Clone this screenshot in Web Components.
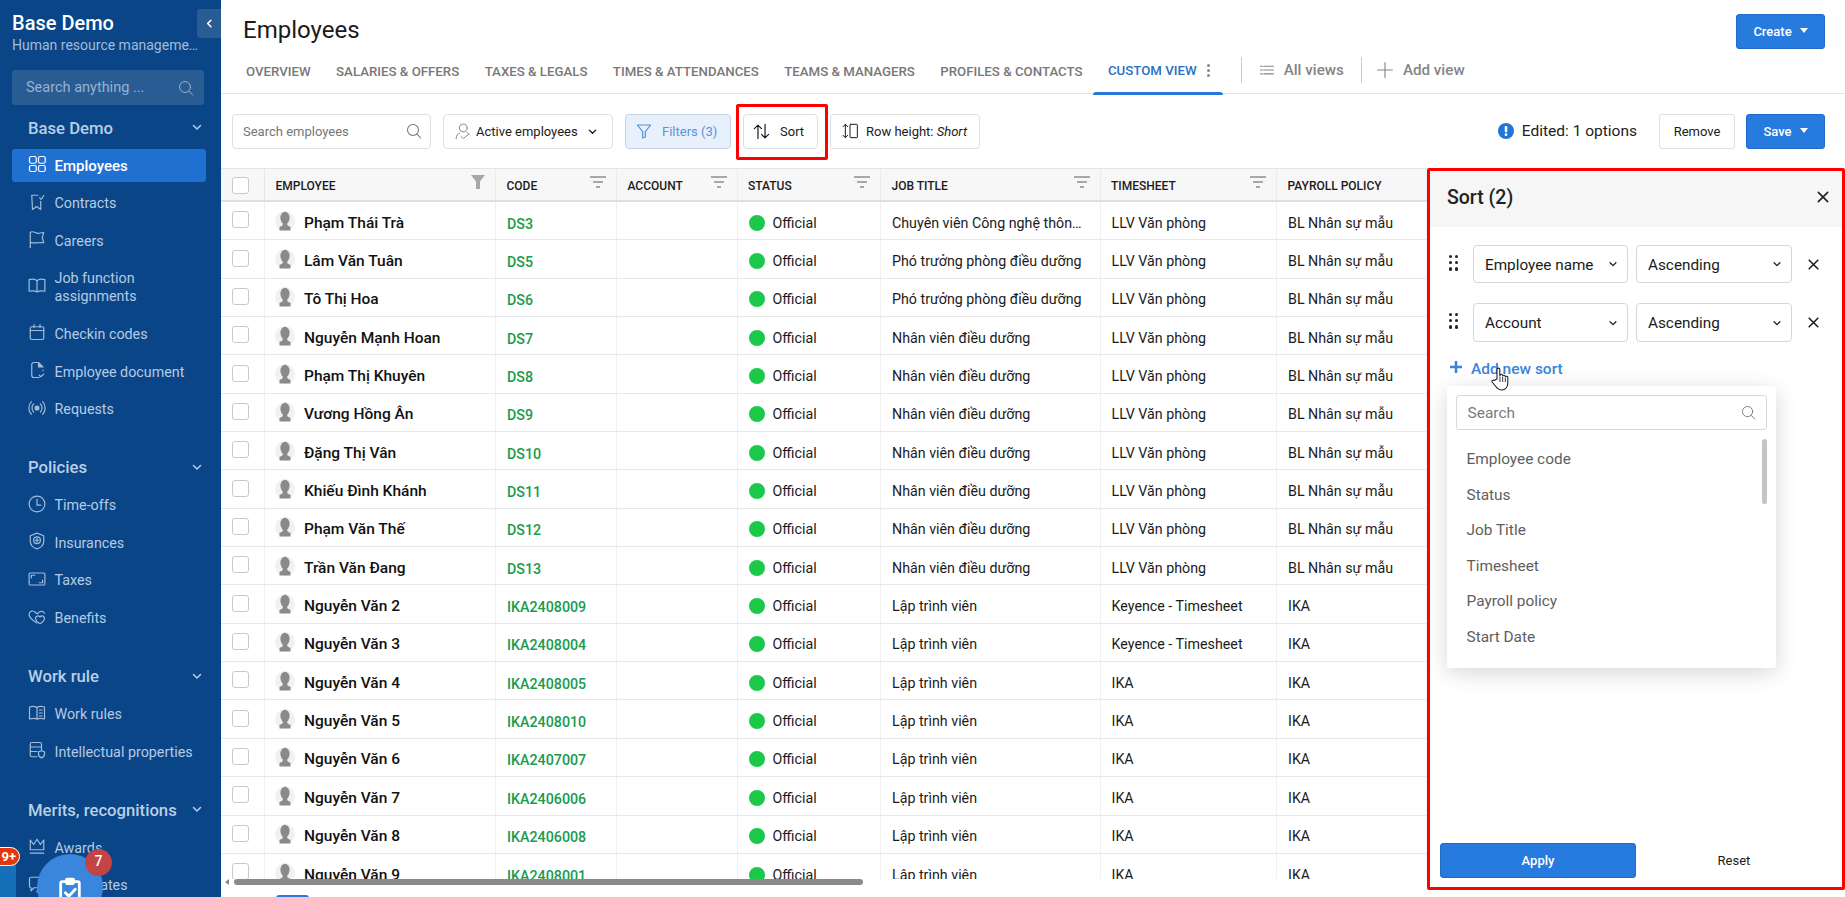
<!DOCTYPE html>
<html lang="en">
  <head>
    <meta charset="UTF-8" />
    <meta name="viewport" content="width=device-width, initial-scale=1.0" />
    <title>Employees</title>
    <style>
      html, body { margin: 0; height: 100%; overflow: hidden; background: #fff; }
      body { font-family: Roboto, "Noto Sans", sans-serif; }
    </style>
  </head>
  <body>
    <app-shell></app-shell>
    <script>
      // Icon set, all on a 24x24 box and drawn with currentColor
      const ICONS = {
        search: '<circle cx="10.5" cy="10.5" r="8.2"/><path d="M16.5 16.8 22 22.5"/>',
        chev: '<path d="M5 9l7 7 7-7" stroke-width="3"/>',
        chevLeft: '<path d="M15 5l-7 7 7 7" stroke-width="3.4"/>',
        grid: '<rect x="2" y="2" width="9" height="9" rx="2.4"/><rect x="14" y="2" width="9" height="9" rx="2.4"/><rect x="2" y="14" width="9" height="8" rx="2.4"/><rect x="14" y="14" width="9" height="8" rx="2.4"/>',
        contract: '<path d="M13 3H5l1 19 5.5-4 5.5 4V11"/><path d="M15.5 6.5l2 2 3.5-5"/>',
        flag: '<path d="M3 24V3c5-2.5 7 2 11 1.5 3-.3 5-1.5 7-1.5l-2 7 2 7c-6-1-10 1.5-18-.5"/>',
        book: '<path d="M12 5C10 3 6 2.5 1.5 3.5V19c4-.8 8-.5 10.5.8 2.5-1.3 6.5-1.6 10.5-.8V3.5C18 2.5 14 3 12 5zM12 5v15"/>',
        calendar: '<rect x="3" y="5" width="18" height="17" rx="2"/><path d="M3 10h18M8 2v4M16 2v4"/>',
        doc: '<path d="M14 2H8a3 3 0 0 0-3 3v14a3 3 0 0 0 3 3h7"/><path d="M14 2l6 6h-6z" fill="currentColor"/><path d="M20 12v1M15 19l2 2 4-3.5"/>',
        radio: '<circle cx="12" cy="12" r="2.6" fill="currentColor"/><path d="M7.5 6.5a8 8 0 0 0 0 11M16.5 6.5a8 8 0 0 1 0 11M4.5 3.5a12.5 12.5 0 0 0 0 17M19.5 3.5a12.5 12.5 0 0 1 0 17"/>',
        clock: '<circle cx="12" cy="12" r="10.5"/><path d="M12 5.5V13.5h5"/>',
        shield: '<path d="M12 1.5l9 3.5v7c0 5.5-4 9-9 10.5C7 21 3 17.5 3 12V5z"/><circle cx="12" cy="11" r="4.5"/><path d="M12 8.5v5M9.5 11h5"/>',
        tax: '<rect x="1.5" y="4" width="21" height="16" rx="1.5"/><path d="M4.5 10.5V7H9M19.5 13.5V17H15"/>',
        hearts: '<path d="M12 20C5 16 1 12 1.5 8 2 4 7 2.5 10 6c1 1.2 2 2 3 1.5"/><path d="M16 21c-3-2-6-4-6-7 0-3.5 4-4.5 6-2 2-2.5 6-1.5 6 2 0 3-3 5-6 7z"/><path d="M13 7c2-3 7-4 9 0"/>',
        rules: '<path d="M12 5C10 3 6 3 2 4v16c4-1 8-1 10 .5 2-1.5 6-1.5 10-.5V4c-4-1-8-1-10 1zM12 5v15"/><path d="M15 8h4M15 12h4M15 16h4"/>',
        ip: '<path d="M12 21H5a2 2 0 0 1-2-2V4a2 2 0 0 1 2-2h11a2 2 0 0 1 2 2v8M3 8h15M3 14h9"/><path d="M18 13l4 1.5v3c0 2.5-2 4-4 5-2-1-4-2.5-4-5v-3z"/>',
        crown: '<path d="M3 4l4.5 6L12 3l4.5 7L21 4v13H3zM3 21.5h18"/>',
        cert: '<path d="M14 17H8l-4 4v-4a2 2 0 0 1-2-2V5a2 2 0 0 1 2-2h15a2 2 0 0 1 2 2v3"/><circle cx="17" cy="13" r="3"/><path d="M12 23c0-3 2-4.5 5-4.5s5 1.5 5 4.5"/>',
        user: '<circle cx="13" cy="7" r="5.5"/><path d="M3 22c0-4 2-7 5-8M18 13c1.5.8 2.5 2 3 3.5"/><path d="M10 19l3 3 8-6.5"/>',
        funnel: '<path d="M2 3h20l-8 10v8l-4 1.5V13z"/>',
        sort: '<path d="M7 22V3M2 8l5-5 5 5M17 2v19M12 16l5 5 5-5"/>',
        rowh: '<rect x="12" y="2" width="11" height="20" rx="1"/><path d="M5 2v20M1.5 5.5 5 2l3.5 3.5M1.5 18.5 5 22l3.5-3.5"/>',
        list: '<path d="M6.5 5.5H23M6.5 12H23M6.5 18.5H23M1 5.5h3M1 12h3M1 18.5h3"/>',
        plus: '<path d="M12 1v22M1 12h22"/>',
        cross: '<path d="M4 4l16 16M20 4 4 20" stroke-width="2.8"/>',
        clip: '<rect x="4" y="4" width="16" height="19" rx="1.5" stroke-width="2.4"/><rect x="8.5" y="1.5" width="7" height="4.5" rx="1" fill="currentColor"/><path d="M8 13.5l3 3 5.5-6" stroke-width="2.4"/>',
      };

      class UiIcon extends HTMLElement {
        connectedCallback() {
          const size = this.getAttribute("size") || 18;
          const sw = this.getAttribute("stroke") || 1.6;
          this.attachShadow({ mode: "open" }).innerHTML = `
            <style>:host { display: inline-flex; flex: none; line-height: 0; }</style>
            <svg width="${size}" height="${size}" viewBox="0 0 24 24" fill="none" stroke="currentColor"
                 stroke-width="${sw}" stroke-linecap="round" stroke-linejoin="round">${ICONS[this.getAttribute("name")]}</svg>`;
        }
      }
      customElements.define("ui-icon", UiIcon);

      // Sidebar entry
      class NavItem extends HTMLElement {
        connectedCallback() {
          this.attachShadow({ mode: "open" }).innerHTML = `
            <style>
              :host { display: flex; align-items: center; gap: 8.5px; margin: 0 15px 0 12px; padding: 7.5px 8px 7.5px 16px;
                      min-height: 18px; font-size: 14.3px; line-height: 18px; color: #b5cbe4; border-radius: 3px; }
              :host([active]) { background: #1f70d0; color: #fff; font-weight: 500; font-size: 15px; }
              ui-icon { color: #9fbcda; width: 18px; margin-top: -3px; }
              :host([active]) ui-icon { color: #fff; }
            </style>
            <ui-icon name="${this.getAttribute("icon")}"></ui-icon><span><slot></slot></span>`;
        }
      }
      customElements.define("nav-item", NavItem);

      class NavSection extends HTMLElement {
        connectedCallback() {
          this.attachShadow({ mode: "open" }).innerHTML = `
            <style>
              :host { display: flex; flex-direction: column; gap: 4.6px; margin-bottom: 25.5px; }
              header { display: flex; align-items: center; justify-content: space-between; height: 33px;
                       padding: 0 18px 0 28px; font-size: 16.7px; font-weight: 500; color: #b9cfe6; }
              ui-icon { color: #b9cfe6; margin-top: -2px; }
            </style>
            <header>${this.getAttribute("label")}<ui-icon name="chev" size="12"></ui-icon></header>
            <slot></slot>`;
        }
      }
      customElements.define("nav-section", NavSection);

      class SideBar extends HTMLElement {
        connectedCallback() {
          this.attachShadow({ mode: "open" }).innerHTML = `
            <style>
              :host { display: block; position: relative; height: 897px; background: #0a4587; overflow: hidden; color: #fff; }
              .brand { padding: 11px 20px 0 12px; height: 57px; box-sizing: border-box; }
              .brand b { display: block; font-size: 20px; font-weight: 500; line-height: 24px; }
              .brand small { display: block; margin-top: 0; font-size: 14px; line-height: 20px; color: #a3bcd6;
                             white-space: nowrap; overflow: hidden; text-overflow: ellipsis; }
              .collapse { position: absolute; top: 9px; right: 0; width: 24px; height: 29px; display: flex; align-items: center;
                          justify-content: center; background: #2a5c94; border-radius: 3px 0 0 3px; }
              .search { display: flex; align-items: center; justify-content: space-between; box-sizing: border-box;
                        margin: 13px 17px 6.5px 12px; height: 35px; padding: 0 10px 0 14px; background: #2a5c94; border-radius: 3px;
                        font-size: 14.5px; color: #98b2ce; }
              .left-dock { position: absolute; left: 0; top: 857px; width: 16px; height: 40px; background: #1570b8; border-radius: 0 6px 0 0; }
              .count { position: absolute; left: -12px; top: 847px; width: 27px; height: 17px; padding-right: 3px; border-radius: 10px; background: #e3380e;
                       border: 1.5px solid #fff; text-align: right; font-size: 13px; line-height: 17px; font-weight: 700; }
              .fab { position: absolute; left: 37px; top: 854px; width: 66px; height: 66px; border-radius: 50%; background: #3a86dc;
                     display: flex; justify-content: center; padding-top: 23px; box-sizing: border-box; }
              .badge { position: absolute; left: 85px; top: 849px; width: 27px; height: 27px; border-radius: 50%; background: #c44343;
                       text-align: center; font-size: 14px; line-height: 24px; font-weight: 500; }
            </style>
            <div class="brand"><b>Base Demo</b><small>Human resource management system</small></div>
            <div class="collapse"><ui-icon name="chevLeft" size="11" stroke="3"></ui-icon></div>
            <div class="search">Search anything ...<ui-icon name="search" size="16" stroke="1.5"></ui-icon></div>
            <slot></slot>
            <div class="left-dock"></div>
            <div class="count">9+</div>
            <div class="fab"><ui-icon name="clip" size="28"></ui-icon></div>
            <div class="badge">7</div>`;
        }
      }
      customElements.define("side-bar", SideBar);

      class PageHeader extends HTMLElement {
        connectedCallback() {
          const tabs = ["OVERVIEW", "SALARIES & OFFERS", "TAXES & LEGALS", "TIMES & ATTENDANCES", "TEAMS & MANAGERS", "PROFILES & CONTACTS"];
          this.attachShadow({ mode: "open" }).innerHTML = `
            <style>
              :host { display: block; height: 94px; box-sizing: border-box; border-bottom: 1.5px solid #e4e4e4; }
              .top { display: flex; justify-content: space-between; align-items: flex-start; height: 49px; padding: 14px 20px 0 22px; box-sizing: border-box; }
              h1 { margin: 0; font-size: 24px; font-weight: 400; line-height: 32px; color: #1b1b1b; }
              .tabs { display: flex; align-items: center; height: 44px; padding-left: 25px; font-size: 13.25px; font-weight: 500; color: #787878; white-space: nowrap; }
              .tab { margin-right: 25.4px; }
              .active { position: relative; display: flex; align-items: center; height: 44px; margin-left: -15px; padding: 0 13px 2px 15px; margin-right: 0; color: #2a70c2; }
              .active::after { content: ""; position: absolute; left: 0; right: 0; bottom: -1px; height: 3px; background: #2779d9; border-radius: 3px 3px 0 0; }
              .dots { margin-left: 10px; display: grid; gap: 2px; }
              .dots i { width: 3px; height: 3px; border-radius: 50%; background: #888; }
              .sep { width: 1px; height: 26px; background: #ccc; margin: -2px 18px 0 18px; }
              .link { display: flex; align-items: center; gap: 10px; margin-top: -3px; font-size: 15.2px; font-weight: 500; color: #858585; }
              .link + .sep { margin-left: 17px; margin-right: 15px; }
            </style>
            <div class="top"><h1>Employees</h1><ui-button primary caret style="width:89px">Create</ui-button></div>
            <div class="tabs">
              ${tabs.map((t) => `<span class="tab">${t.replace(/&/g, "&amp;")}</span>`).join("")}
              <span class="tab active">CUSTOM VIEW<span class="dots"><i></i><i></i><i></i></span></span>
              <span class="sep"></span>
              <span class="link"><ui-icon name="list" size="14" stroke="2"></ui-icon>All views</span>
              <span class="sep"></span>
              <span class="link"><ui-icon name="plus" size="16" stroke="1.7"></ui-icon>Add view</span>
            </div>`;
        }
      }
      customElements.define("page-header", PageHeader);

      class UiButton extends HTMLElement {
        connectedCallback() {
          const caret = this.hasAttribute("caret");
          this.attachShadow({ mode: "open" }).innerHTML = `
            <style>
              :host { display: inline-flex; align-items: center; justify-content: center; gap: 8px; box-sizing: border-box; height: 35px;
                      padding: 0 14px; font-size: 13px; background: #fff; color: #1b1b1b; border: 1px solid #dfdfdf; border-radius: 3px; white-space: nowrap; }
              :host([primary]) { background: #277ade; border-color: #1f6cc6; color: #fff; font-weight: 500; }
              .caret { width: 0; height: 0; border: 4.5px solid transparent; border-top: 5px solid #fff; border-bottom: 0; margin-top: -2px; }
            </style>
            <slot></slot>${caret ? '<span class="caret"></span>' : ""}`;
        }
      }
      customElements.define("ui-button", UiButton);

      class ToolChip extends HTMLElement {
        connectedCallback() {
          this.attachShadow({ mode: "open" }).innerHTML = `
            <style>
              :host { position: relative; display: inline-flex; align-items: center; box-sizing: border-box; height: 35px; padding: 0 11px;
                      font-size: 13px; color: #1b1b1b; background: #fff; border: 1px solid #dfdfdf; border-radius: 4px; white-space: nowrap; flex: none; }
              :host([on]) { background: #e8f0fb; border-color: #c3d3e6; color: #5b92de; }
              :host([marked])::after { content: ""; position: absolute; left: -8px; right: -11px; top: -11px; bottom: -12px; border: 3px solid #f00; border-radius: 2px; }
            </style>
            <slot></slot>`;
        }
      }
      customElements.define("tool-chip", ToolChip);

      class PageToolbar extends HTMLElement {
        connectedCallback() {
          this.attachShadow({ mode: "open" }).innerHTML = `
            <style>
              :host { display: flex; align-items: center; gap: 12px; height: 74px; box-sizing: border-box; padding: 0 20px 0 11px; }
              .find { width: 199px; justify-content: space-between; color: #767676; padding: 0 8px 0 10px; }
              .spacer { flex: 1; }
              .edited { display: flex; align-items: center; gap: 8px; font-size: 15.5px; color: #222; margin-right: 10px; }
              svg { display: block; flex: none; }
              .g { color: #8a8a8a; margin-right: 5px; margin-left: -1px; }
              .blue { color: #4a94dd; margin-right: 10px; margin-left: -1px; }
              .i { color: #1b1b1b; }
              em { font-style: italic; }
            </style>
            <tool-chip class="find">Search employees<ui-icon name="search" size="16" stroke="1.6"></ui-icon></tool-chip>
            <tool-chip style="width:170px"><ui-icon class="g" name="user" size="17" stroke="1.4"></ui-icon>Active employees<ui-icon name="chev" size="11" style="margin-left:9px"></ui-icon></tool-chip>
            <tool-chip on style="width:106px"><ui-icon class="blue" name="funnel" size="16" stroke="1.8"></ui-icon>Filters (3)</tool-chip>
            <tool-chip marked style="width:75px;padding-left:9px"><ui-icon class="i" name="sort" size="17" stroke="1.7" style="margin-right:10px"></ui-icon>Sort</tool-chip>
            <tool-chip style="width:150px"><ui-icon class="i" name="rowh" size="16" stroke="1.5" style="margin-right:8px"></ui-icon><span>Row height: <em>Short</em></span></tool-chip>
            <span class="spacer"></span>
            <span class="edited"><svg width="16" height="16" viewBox="0 0 15 15"><circle cx="7.5" cy="7.5" r="7.5" fill="#2276d8"/><rect x="6.3" y="2.8" width="2.4" height="6" rx="1" fill="#fff"/><circle cx="7.5" cy="11" r="1.3" fill="#fff"/></svg>Edited: 1 options</span>
            <ui-button style="width:76px">Remove</ui-button>
            <ui-button primary caret style="width:79px;margin-left:-1px">Save</ui-button>`;
        }
      }
      customElements.define("page-toolbar", PageToolbar);

      const COLS = "44px 231px 121px 120.5px 143.5px 219.5px 176.5px 1fr";

      class HeadCell extends HTMLElement {
        connectedCallback() {
          const kind = this.getAttribute("filter");
          const glyph = kind === "solid"
            ? '<svg width="14" height="14" viewBox="0 0 14 14"><path d="M0 0h14L9 6.5V14H5V6.5z" fill="#a8a8a8"/></svg>'
            : kind === "lines"
            ? '<svg width="16" height="12" viewBox="0 0 16 12"><path d="M0 1h16M3 6h10M6 11h4" stroke="#a8a8a8" stroke-width="2"/></svg>'
            : "";
          this.attachShadow({ mode: "open" }).innerHTML = `
            <style>
              :host { display: flex; align-items: center; justify-content: space-between; box-sizing: border-box; padding: 0 10px 0 10.5px;
                      font-size: 12px; font-weight: 500; color: #1b1b1b; border-right: 1px solid #ececec; min-width: 0; }
              span { padding-top: 3px; }
              svg { margin-top: -5px; }
            </style>
            <span><slot></slot></span>${glyph}`;
        }
      }
      customElements.define("head-cell", HeadCell);

      class CheckBox extends HTMLElement {
        connectedCallback() {
          this.attachShadow({ mode: "open" }).innerHTML = `
            <style>
              :host { display: block; width: 17px; height: 17px; box-sizing: border-box; background: #fff; border: 1px solid #c9c9c9; border-radius: 3px; }
            </style>`;
        }
      }
      customElements.define("check-box", CheckBox);

      class EmployeeRow extends HTMLElement {
        connectedCallback() {
          const a = (n) => this.getAttribute(n);
          this.attachShadow({ mode: "open" }).innerHTML = `
            <style>
              :host { display: grid; grid-template-columns: ${COLS}; height: 38.35px; box-sizing: border-box; border-bottom: 1px solid #e8e8e8; font-size: 14.25px; color: #1b1b1b; }
              div { display: flex; align-items: center; box-sizing: border-box; padding: 4px 11px 0; border-right: 1px solid #f0f0f0; white-space: nowrap; overflow: hidden; min-width: 0; }
              .check { padding: 0 0 2px 11px; }
              .name { padding: 0 0 0 10px; gap: 9px; font-size: 15.5px; font-weight: 500; color: #111; }
              .name span { padding-top: 4px; }
              .code { font-weight: 500; color: #1a9b4b; padding-top: 6px; }
              .dot { width: 16px; height: 16px; border-radius: 50%; background: #1cc84a; margin-right: 8px; flex: none; }
              .title { padding-right: 14px; }
              .title span { overflow: hidden; text-overflow: ellipsis; }
              svg { flex: none; }
            </style>
            <div class="check"><check-box></check-box></div>
            <div class="name"><svg width="20" height="20" viewBox="0 0 20 20"><circle cx="10" cy="10" r="10" fill="#f1f1f1"/><ellipse cx="10" cy="7" rx="4.6" ry="6.2" fill="#8a8a8a"/><path d="M8 11.5h4l.5 3 3 1.500V19.500H4.500V16l3-1.500z" fill="#8a8a8a"/></svg><span>${a("name")}</span></div>
            <div class="code">${a("code")}</div>
            <div></div>
            <div><span class="dot"></span>Official</div>
            <div class="title"><span>${a("job")}</span></div>
            <div>${a("sheet")}</div>
            <div>${a("policy")}</div>`;
        }
      }
      customElements.define("employee-row", EmployeeRow);

      const PEOPLE = [
        ["Phạm Thái Trà", "DS3", "Chuyên viên Công nghệ thông tin"],
        ["Lâm Văn Tuân", "DS5", "Phó trưởng phòng điều dưỡng"],
        ["Tô Thị Hoa", "DS6", "Phó trưởng phòng điều dưỡng"],
        ["Nguyễn Mạnh Hoan", "DS7", "Nhân viên điều dưỡng"],
        ["Phạm Thị Khuyên", "DS8", "Nhân viên điều dưỡng"],
        ["Vương Hồng Ân", "DS9", "Nhân viên điều dưỡng"],
        ["Đặng Thị Vân", "DS10", "Nhân viên điều dưỡng"],
        ["Khiếu Đình Khánh", "DS11", "Nhân viên điều dưỡng"],
        ["Phạm Văn Thế", "DS12", "Nhân viên điều dưỡng"],
        ["Trần Văn Đang", "DS13", "Nhân viên điều dưỡng"],
        ["Nguyễn Văn 2", "IKA2408009", "Lập trình viên", "Keyence - Timesheet", "IKA"],
        ["Nguyễn Văn 3", "IKA2408004", "Lập trình viên", "Keyence - Timesheet", "IKA"],
        ["Nguyễn Văn 4", "IKA2408005", "Lập trình viên", "IKA", "IKA"],
        ["Nguyễn Văn 5", "IKA2408010", "Lập trình viên", "IKA", "IKA"],
        ["Nguyễn Văn 6", "IKA2407007", "Lập trình viên", "IKA", "IKA"],
        ["Nguyễn Văn 7", "IKA2406006", "Lập trình viên", "IKA", "IKA"],
        ["Nguyễn Văn 8", "IKA2406008", "Lập trình viên", "IKA", "IKA"],
        ["Nguyễn Văn 9", "IKA2408001", "Lập trình viên", "IKA", "IKA"],
      ];

      class DataTable extends HTMLElement {
        connectedCallback() {
          const rows = PEOPLE.map(([name, code, job, sheet = "LLV Văn phòng", policy = "BL Nhân sự mẫu"]) =>
            `<employee-row name="${name}" code="${code}" job="${job}" sheet="${sheet}" policy="${policy}"></employee-row>`).join("");
          this.attachShadow({ mode: "open" }).innerHTML = `
            <style>
              :host { display: flex; flex-direction: column; flex: 1; min-width: 0; height: 729px; }
              .head { display: grid; grid-template-columns: ${COLS}; height: 34px; box-sizing: border-box; flex: none;
                      background: #f7f7f7; border-top: 1px solid #e4e4e4; border-bottom: 2px solid #dfdfdf; }
              .box { display: flex; align-items: center; padding: 2px 0 0 11px; border-right: 1px solid #e6e6e6; }
              .rows { height: 677px; overflow: hidden; flex: none; }
              .bar { display: flex; align-items: center; height: 6px; flex: none; padding-left: 4px; gap: 4px; }
              .bar i { width: 0; height: 0; border: 3px solid transparent; border-right: 4px solid #888; border-left: 0; }
              .bar b { width: 629px; height: 6px; margin-left: 1px; background: #8a8a8a; border-radius: 3px; }
              .pager { margin: 10px 0 0 55px; width: 33px; height: 12px; background: #277ade; border-radius: 3px; flex: none; }
            </style>
            <div class="head">
              <div class="box"><check-box></check-box></div>
              <head-cell filter="solid">EMPLOYEE</head-cell>
              <head-cell filter="lines">CODE</head-cell>
              <head-cell filter="lines">ACCOUNT</head-cell>
              <head-cell filter="lines">STATUS</head-cell>
              <head-cell filter="lines">JOB TITLE</head-cell>
              <head-cell filter="lines">TIMESHEET</head-cell>
              <head-cell>PAYROLL POLICY</head-cell>
            </div>
            <div class="rows">${rows}</div>
            <div class="bar"><i></i><b></b></div>
            <div class="pager"></div>`;
        }
      }
      customElements.define("data-table", DataTable);

      class SelectBox extends HTMLElement {
        connectedCallback() {
          this.attachShadow({ mode: "open" }).innerHTML = `
            <style>
              :host { display: flex; align-items: center; justify-content: space-between; box-sizing: border-box; padding: 0 9px 0 11px;
                      border: 1px solid #d6d6d6; border-radius: 4px; font-size: 15.3px; color: #1b1b1b; background: #fff; white-space: nowrap; }
              span { padding-top: 1px; }
            </style>
            <span><slot></slot></span><ui-icon name="chev" size="10"></ui-icon>`;
        }
      }
      customElements.define("select-box", SelectBox);

      class SortRule extends HTMLElement {
        connectedCallback() {
          this.attachShadow({ mode: "open" }).innerHTML = `
            <style>
              :host { display: grid; grid-template-columns: 154.5px 155.5px; gap: 8.5px; height: ${this.getAttribute("h") || 38}px; padding-left: 43px; position: relative; }
              .drag { position: absolute; left: 19px; top: 10px; display: grid; grid-template-columns: 3.2px 3.2px; gap: 3px; }
              .drag i { width: 3.2px; height: 3.2px; background: #222; border-radius: 50%; }
              .x { position: absolute; left: 377px; top: 13px; color: #1b1b1b; }
            </style>
            <span class="drag"><i></i><i></i><i></i><i></i><i></i><i></i></span>
            <select-box>${this.getAttribute("field")}</select-box>
            <select-box>Ascending</select-box>
            <ui-icon class="x" name="cross" size="13"></ui-icon>`;
        }
      }
      customElements.define("sort-rule", SortRule);

      class FieldMenu extends HTMLElement {
        connectedCallback() {
          const items = ["Employee code", "Status", "Job Title", "Timesheet", "Payroll policy", "Start Date"];
          this.attachShadow({ mode: "open" }).innerHTML = `
            <style>
              :host { display: block; position: relative; box-sizing: border-box; width: 329px; height: 281.5px; margin: 7px 0 0 17px; padding: 9px 9px 0 8.5px;
                      background: #fff; border-radius: 3px; box-shadow: 0 5px 22px rgba(0,0,0,.16); }
              .find { display: flex; align-items: center; justify-content: space-between; box-sizing: border-box; height: 35px; padding: 0 10px 0 11px;
                      border: 1px solid #d9d9d9; border-radius: 3px; font-size: 15.5px; color: #7b7b7b; }
              ul { list-style: none; margin: 12px 0 0; padding: 0 0 0 11px; }
              li { height: 35.5px; line-height: 35.5px; font-size: 15.4px; color: #5e5e5e; }
              .thumb { position: absolute; right: 9px; top: 53px; width: 5px; height: 65px; background: #c4c4c4; border-radius: 3px; }
            </style>
            <div class="find">Search<ui-icon name="search" size="15" stroke="1.5"></ui-icon></div>
            <ul>${items.map((i) => `<li>${i}</li>`).join("")}</ul>
            <span class="thumb"></span>`;
        }
      }
      customElements.define("field-menu", FieldMenu);

      class SortPanel extends HTMLElement {
        connectedCallback() {
          this.attachShadow({ mode: "open" }).innerHTML = `
            <style>
              :host { display: flex; flex-direction: column; flex: none; box-sizing: border-box; width: 418px; height: 722px; background: #fff; border: 3px solid #f00; border-radius: 2px; position: relative; z-index: 1; }
              header { display: flex; align-items: center; justify-content: space-between; height: 56px; box-sizing: border-box; flex: none; padding: 0 12px 4px 17px; background: #f6f6f6; font-size: 19.5px; font-weight: 500; color: #222; }
              .rules { display: flex; flex-direction: column; gap: 20px; margin-top: 18px; }
              .add { position: relative; display: flex; align-items: center; height: 20px; margin: 17px 0 0 20px; font-size: 15.5px; font-weight: 500; color: #3a83dd; }
              .add ui-icon { margin-right: 9px; margin-top: -4px; }
              .hand { position: absolute; left: 41px; top: 8px; z-index: 2; }
              .foot { margin-top: auto; display: grid; grid-template-columns: 196px 1fr; align-items: center; padding: 0 0 9.5px 10px; }
              .foot ui-button { width: 196px; }
              .reset { text-align: center; font-size: 13px; color: #1b1b1b; padding-right: 10px; }
            </style>
            <header>Sort (2)<ui-icon name="cross" size="14"></ui-icon></header>
            <div class="rules">
              <sort-rule field="Employee name"></sort-rule>
              <sort-rule field="Account" h="39"></sort-rule>
            </div>
            <div class="add"><ui-icon name="plus" size="12" stroke="5"></ui-icon>Add new sort
              <svg class="hand" width="19" height="24" viewBox="0 0 19 24"><path d="M6 12V2.5a1.4 1.4 0 0 1 2.8 0V9l.4-1a1.3 1.3 0 0 1 2.4.2l.2.8a1.3 1.3 0 0 1 2.4.2l.1.8a1.3 1.3 0 0 1 2.5.5V16c0 4-2.5 7-6 7-3 0-4.5-1.5-6-3.5L1.2 15c-.8-1.2.8-2.6 2-1.5z" fill="#fff" stroke="#1d2433" stroke-width="1.1" stroke-linejoin="round"/><path d="M9 10v5M11.7 10v5M14.3 11v4" stroke="#1d2433" stroke-width=".9"/></svg>
            </div>
            <field-menu></field-menu>
            <div class="foot"><ui-button primary>Apply</ui-button><span class="reset">Reset</span></div>`;
        }
      }
      customElements.define("sort-panel", SortPanel);

      class AppShell extends HTMLElement {
        connectedCallback() {
          this.attachShadow({ mode: "open" }).innerHTML = `
            <style>
              :host { display: grid; grid-template-columns: 221px 1fr; height: 897px; overflow: hidden; font-family: Roboto, "Noto Sans", sans-serif; }
              main { display: flex; flex-direction: column; min-width: 0; }
              .body { display: flex; min-height: 0; align-items: flex-start; }
            </style>
            <side-bar>
              <nav-section label="Base Demo">
                <nav-item icon="grid" active>Employees</nav-item>
                <nav-item icon="contract">Contracts</nav-item>
                <nav-item icon="flag">Careers</nav-item>
                <nav-item icon="book">Job function<br>assignments</nav-item>
                <nav-item icon="calendar">Checkin codes</nav-item>
                <nav-item icon="doc">Employee document</nav-item>
                <nav-item icon="radio">Requests</nav-item>
              </nav-section>
              <nav-section label="Policies">
                <nav-item icon="clock">Time-offs</nav-item>
                <nav-item icon="shield">Insurances</nav-item>
                <nav-item icon="tax">Taxes</nav-item>
                <nav-item icon="hearts">Benefits</nav-item>
              </nav-section>
              <nav-section label="Work rule">
                <nav-item icon="rules">Work rules</nav-item>
                <nav-item icon="ip">Intellectual properties</nav-item>
              </nav-section>
              <nav-section label="Merits, recognitions">
                <nav-item icon="crown">Awards</nav-item>
                <nav-item icon="cert">Certificates</nav-item>
              </nav-section>
            </side-bar>
            <main>
              <page-header></page-header>
              <page-toolbar></page-toolbar>
              <div class="body"><data-table></data-table><sort-panel></sort-panel></div>
            </main>`;
        }
      }
      customElements.define("app-shell", AppShell);
    </script>
  </body>
</html>
